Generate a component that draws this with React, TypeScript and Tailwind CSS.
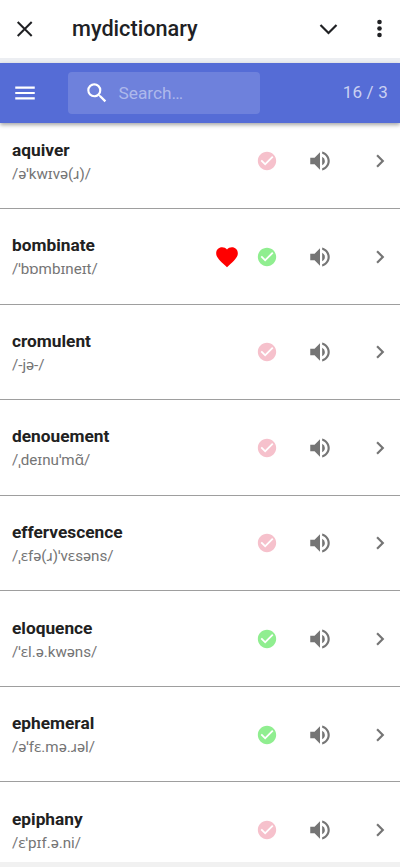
import {
  MdCheckCircle,
  MdChevronRight,
  MdFavorite,
  MdMenu,
  MdSearch,
  MdVolumeUp,
} from "react-icons/md";

type Word = {
  name: string;
  phonetic: string;
  learned?: boolean;
  favorite?: boolean;
};

const words: Word[] = [
  { name: "aquiver", phonetic: "/əˈkwɪvə(ɹ)/" },
  { name: "bombinate", phonetic: "/ˈbɒmbɪneɪt/", learned: true, favorite: true },
  { name: "cromulent", phonetic: "/-jə-/" },
  { name: "denouement", phonetic: "/ˌdeɪnuˈmɑ̃/" },
  { name: "effervescence", phonetic: "/ˌɛfə(ɹ)ˈvɛsəns/" },
  { name: "eloquence", phonetic: "/ˈɛl.ə.kwəns/", learned: true },
  { name: "ephemeral", phonetic: "/əˈfɛ.mə.ɹəl/", learned: true },
  { name: "epiphany", phonetic: "/ɛˈpɪf.ə.ni/" },
];

function TitleBar() {
  return (
    <div className="flex h-[58px] items-center bg-white pr-[14px] pl-4 text-[#202124]">
      <svg width="18" height="18" viewBox="0 0 18 18" fill="none" stroke="currentColor" strokeWidth="2">
        <path d="M1.7 2l14 14M15.7 2l-14 14" />
      </svg>
      <h1 className="ml-[38px] flex-1 text-[21.7px] leading-none font-medium">
        mydictionary
      </h1>
      <svg className="mr-[35px]" width="20" height="12" viewBox="0 0 20 12" fill="none" stroke="currentColor" strokeWidth="2.2">
        <path d="M2.5 2l8 8 8-8" />
      </svg>
      <svg width="13" height="20" viewBox="0 0 13 20" fill="currentColor">
        <circle cx="6.5" cy="3" r="2.3" />
        <circle cx="6.5" cy="9.5" r="2.3" />
        <circle cx="6.5" cy="16" r="2.3" />
      </svg>
    </div>
  );
}

function AppBar() {
  return (
    <header className="relative z-10 flex h-[60px] items-center bg-[#556cd6] pr-3 pl-3 text-white shadow-[0_2px_4px_rgba(0,0,0,0.35)]">
      <MdMenu size={26} />
      <div className="ml-[29.5px] flex h-[42px] w-[192.5px] items-center rounded bg-white/15 pl-4">
        <MdSearch size={26} />
        <span className="mt-px ml-[9px] text-[17.3px] text-white/45">Search…</span>
      </div>
      <span className="ml-auto text-[17px] tracking-[0.2px] text-white/70">
        16 / 3
      </span>
    </header>
  );
}

function WordRow({ word }: { word: Word }) {
  return (
    <li className="flex h-[95.6px] items-center border-b border-[#9e9e9e] pr-[7.5px] pl-3">
      <div className="flex-1 pt-[2px]">
        <p className="text-[17.3px] leading-6 font-bold text-[#212121]">
          {word.name}
        </p>
        <p className="text-[15.2px] leading-6 text-[#757575]">
          {word.phonetic}
        </p>
      </div>
      <div className="flex items-center pt-px text-[#757575]">
        {word.favorite && <MdFavorite size={26} className="mr-[16px] text-[#ff0000]" />}
        <MdCheckCircle
          size={22}
          className={word.learned ? "text-[#90ee90]" : "text-[#f6c1cc]"}
        />
        <MdVolumeUp size={26} className="ml-[28.4px]" />
        <MdChevronRight size={26} className="ml-[33.8px]" />
      </div>
    </li>
  );
}

export default function App() {
  return (
    <div className="flex h-[867px] flex-col overflow-hidden bg-[#f1f1f1] font-['Roboto','Noto_Sans',sans-serif]">
      <TitleBar />
      <div className="h-[5px] shrink-0 bg-[#eceef2]" />
      <AppBar />
      <ul className="-mt-[9.7px] h-[749px] overflow-hidden bg-white">
        {words.map((word) => (
          <WordRow key={word.name} word={word} />
        ))}
      </ul>
    </div>
  );
}
